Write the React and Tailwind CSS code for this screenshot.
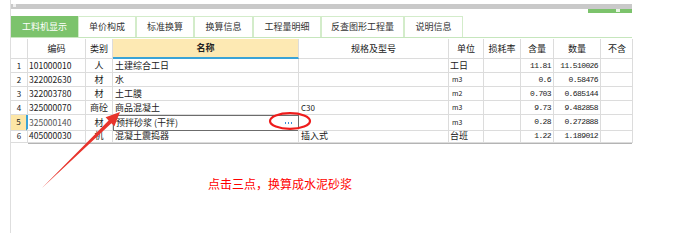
const tabs = [
  { label: "工料机显示", w: "w-[67px]", active: true },
  { label: "单价构成", w: "w-[58px]" },
  { label: "标准换算", w: "w-[58px]" },
  { label: "换算信息", w: "w-[59px]" },
  { label: "工程量明细", w: "w-[68px]" },
  { label: "反查图形工程量", w: "w-[83px]" },
  { label: "说明信息", w: "w-[59px]" },
];

const rows = [
  { no: "1", code: "101000010", cat: "人", name: "土建综合工日", spec: "", unit: "工日", big: true, qty: "11.81", amt: "11.510026" },
  { no: "2", code: "322002630", cat: "材", name: "水", spec: "", unit: "m3", qty: "0.6", amt: "0.58476" },
  { no: "3", code: "322003780", cat: "材", name: "土工膜", spec: "", unit: "m2", qty: "0.703", amt: "0.685144" },
  { no: "4", code: "325000070", cat: "商砼", name: "商品混凝土", spec: "C30", unit: "m3", qty: "9.73", amt: "9.482858" },
  { no: "5", code: "325000140", cat: "材", name: "预拌砂浆 (干拌)", spec: "", unit: "m3", qty: "0.28", amt: "0.272888", sel: true },
  { no: "6", code: "405000030", cat: "机", name: "混凝土震捣器", spec: "插入式", unit: "台班", big: true, qty: "1.22", amt: "1.189012" },
];

const cols = "grid grid-cols-[17px_58px_27px_186px_150px_35px_37px_33px_47px_32px]";
const cell = "border-r border-b border-[#dcdcdc] flex items-center overflow-hidden whitespace-nowrap";

export default function App() {
  return (
    <div className="relative w-[694px] h-[251px] bg-white text-[#222] font-['Noto_Sans_CJK_SC','Noto_Sans',sans-serif]">
      <div className="ml-[10px] w-[622px] pt-[4px] h-[233px] border-l border-[#dedede]">
        {/* top scroll strip */}
        <div className="h-[5px] bg-[#c9c9c9] flex">
          <div className="ml-[2px] w-[3px] h-[3px] bg-[#f0f0f0]" />
        </div>
        <div className="flex justify-end h-[4px]">
          <div className="w-[44px] h-[4px] bg-[#7cc36c] flex justify-end pr-[12px]">
            <div className="w-[4px] h-[3px] bg-[#e8f5e4]" />
          </div>
        </div>

        {/* tabs */}
        <div className="mt-[3px] flex h-[22px] border-b border-[#c6e6bd]">
          {tabs.map((t) => (
            <div
              key={t.label}
              className={`${t.w} flex items-center justify-center text-[9px] ${
                t.active ? "bg-[#7cc36c] text-white" : "border border-b-0 border-[#d3ecca] text-[#333]"
              }`}
            >
              {t.label}
            </div>
          ))}
        </div>

        {/* table header */}
        <div className={`${cols} h-[20px] text-[9px] mt-[1px]`}>
          <div className={cell} />
          <div className={`${cell} justify-center`}>编码</div>
          <div className={`${cell} justify-center`}>类别</div>
          <div className="bg-[#fde9b3] border-r border-[#dcdcdc] border-b-2 border-b-[#3aa3d6] flex items-center justify-center font-semibold">名称</div>
          <div className={`${cell} justify-center`}>规格及型号</div>
          <div className={`${cell} justify-center`}>单位</div>
          <div className={`${cell} justify-center`}>损耗率</div>
          <div className={`${cell} justify-center`}>含量</div>
          <div className={`${cell} justify-center`}>数量</div>
          <div className={`${cell} pl-[7px]`}>不含</div>
        </div>

        {/* table rows */}
        {rows.map((r) => (
          <div key={r.no} className={`${cols} h-[14px] text-[9px]`}>
            <div className={`${cell} justify-center text-[8px] ${r.sel ? "bg-[#fde6a6] border-r-2 border-r-[#3aa3d6]" : ""}`}>{r.no}</div>
            <div className={`${cell} pl-[1px] text-[8.5px] ${r.sel ? "text-[#555]" : ""}`}>{r.code}</div>
            <div className={`${cell} justify-center`}>{r.cat}</div>
            {r.sel ? (
              <div className="border border-[#6c6c6c] flex items-center justify-between pl-[2px] pr-[6px] whitespace-nowrap">
                <span>{r.name}</span>
                <span className="flex gap-[1.5px] items-center">
                  <span className="w-[1.5px] h-[1.5px] bg-[#3a8fd8]" />
                  <span className="w-[1.5px] h-[1.5px] bg-[#3a8fd8]" />
                  <span className="w-[1.5px] h-[1.5px] bg-[#3a8fd8]" />
                </span>
              </div>
            ) : (
              <div className={`${cell} pl-[2px]`}>{r.name}</div>
            )}
            <div className={`${cell} pl-[2px] ${r.spec === "C30" ? "text-[8px]" : ""}`}>{r.spec}</div>
            <div className={`${cell} pl-[1px] ${r.big ? "" : "text-[7px] pl-[3px]"}`}>{r.unit}</div>
            <div className={cell} />
            <div className={`${cell} justify-end pr-[2px] text-[8px] font-['Liberation_Mono',monospace] tracking-[-0.6px]`}>{r.qty}</div>
            <div className={`${cell} justify-end pr-[2px] text-[8px] font-['Liberation_Mono',monospace] tracking-[-0.6px]`}>{r.amt}</div>
            <div className={cell} />
          </div>
        ))}
        <div className="ml-[17px] h-[1px] bg-[#b4b4b4]" />

        {/* annotation text */}
        <div className="mt-[33px] pl-[197px] text-[12px] leading-[14px] text-[#ff0000]">
          点击三点，换算成水泥砂浆
        </div>
      </div>

      {/* annotation arrow + circle */}
      <svg className="absolute left-0 top-0 pointer-events-none" width="694" height="251">
        <polygon
          points="42,188 111.4,123.2 114.4,126.3 120,112 105.6,117.3 108.6,120.4"
          fill="#e8342c"
        />
        <ellipse cx="290" cy="121" rx="20" ry="7.8" fill="none" stroke="#ee1c1c" strokeWidth="2.2" />
      </svg>
    </div>
  );
}
